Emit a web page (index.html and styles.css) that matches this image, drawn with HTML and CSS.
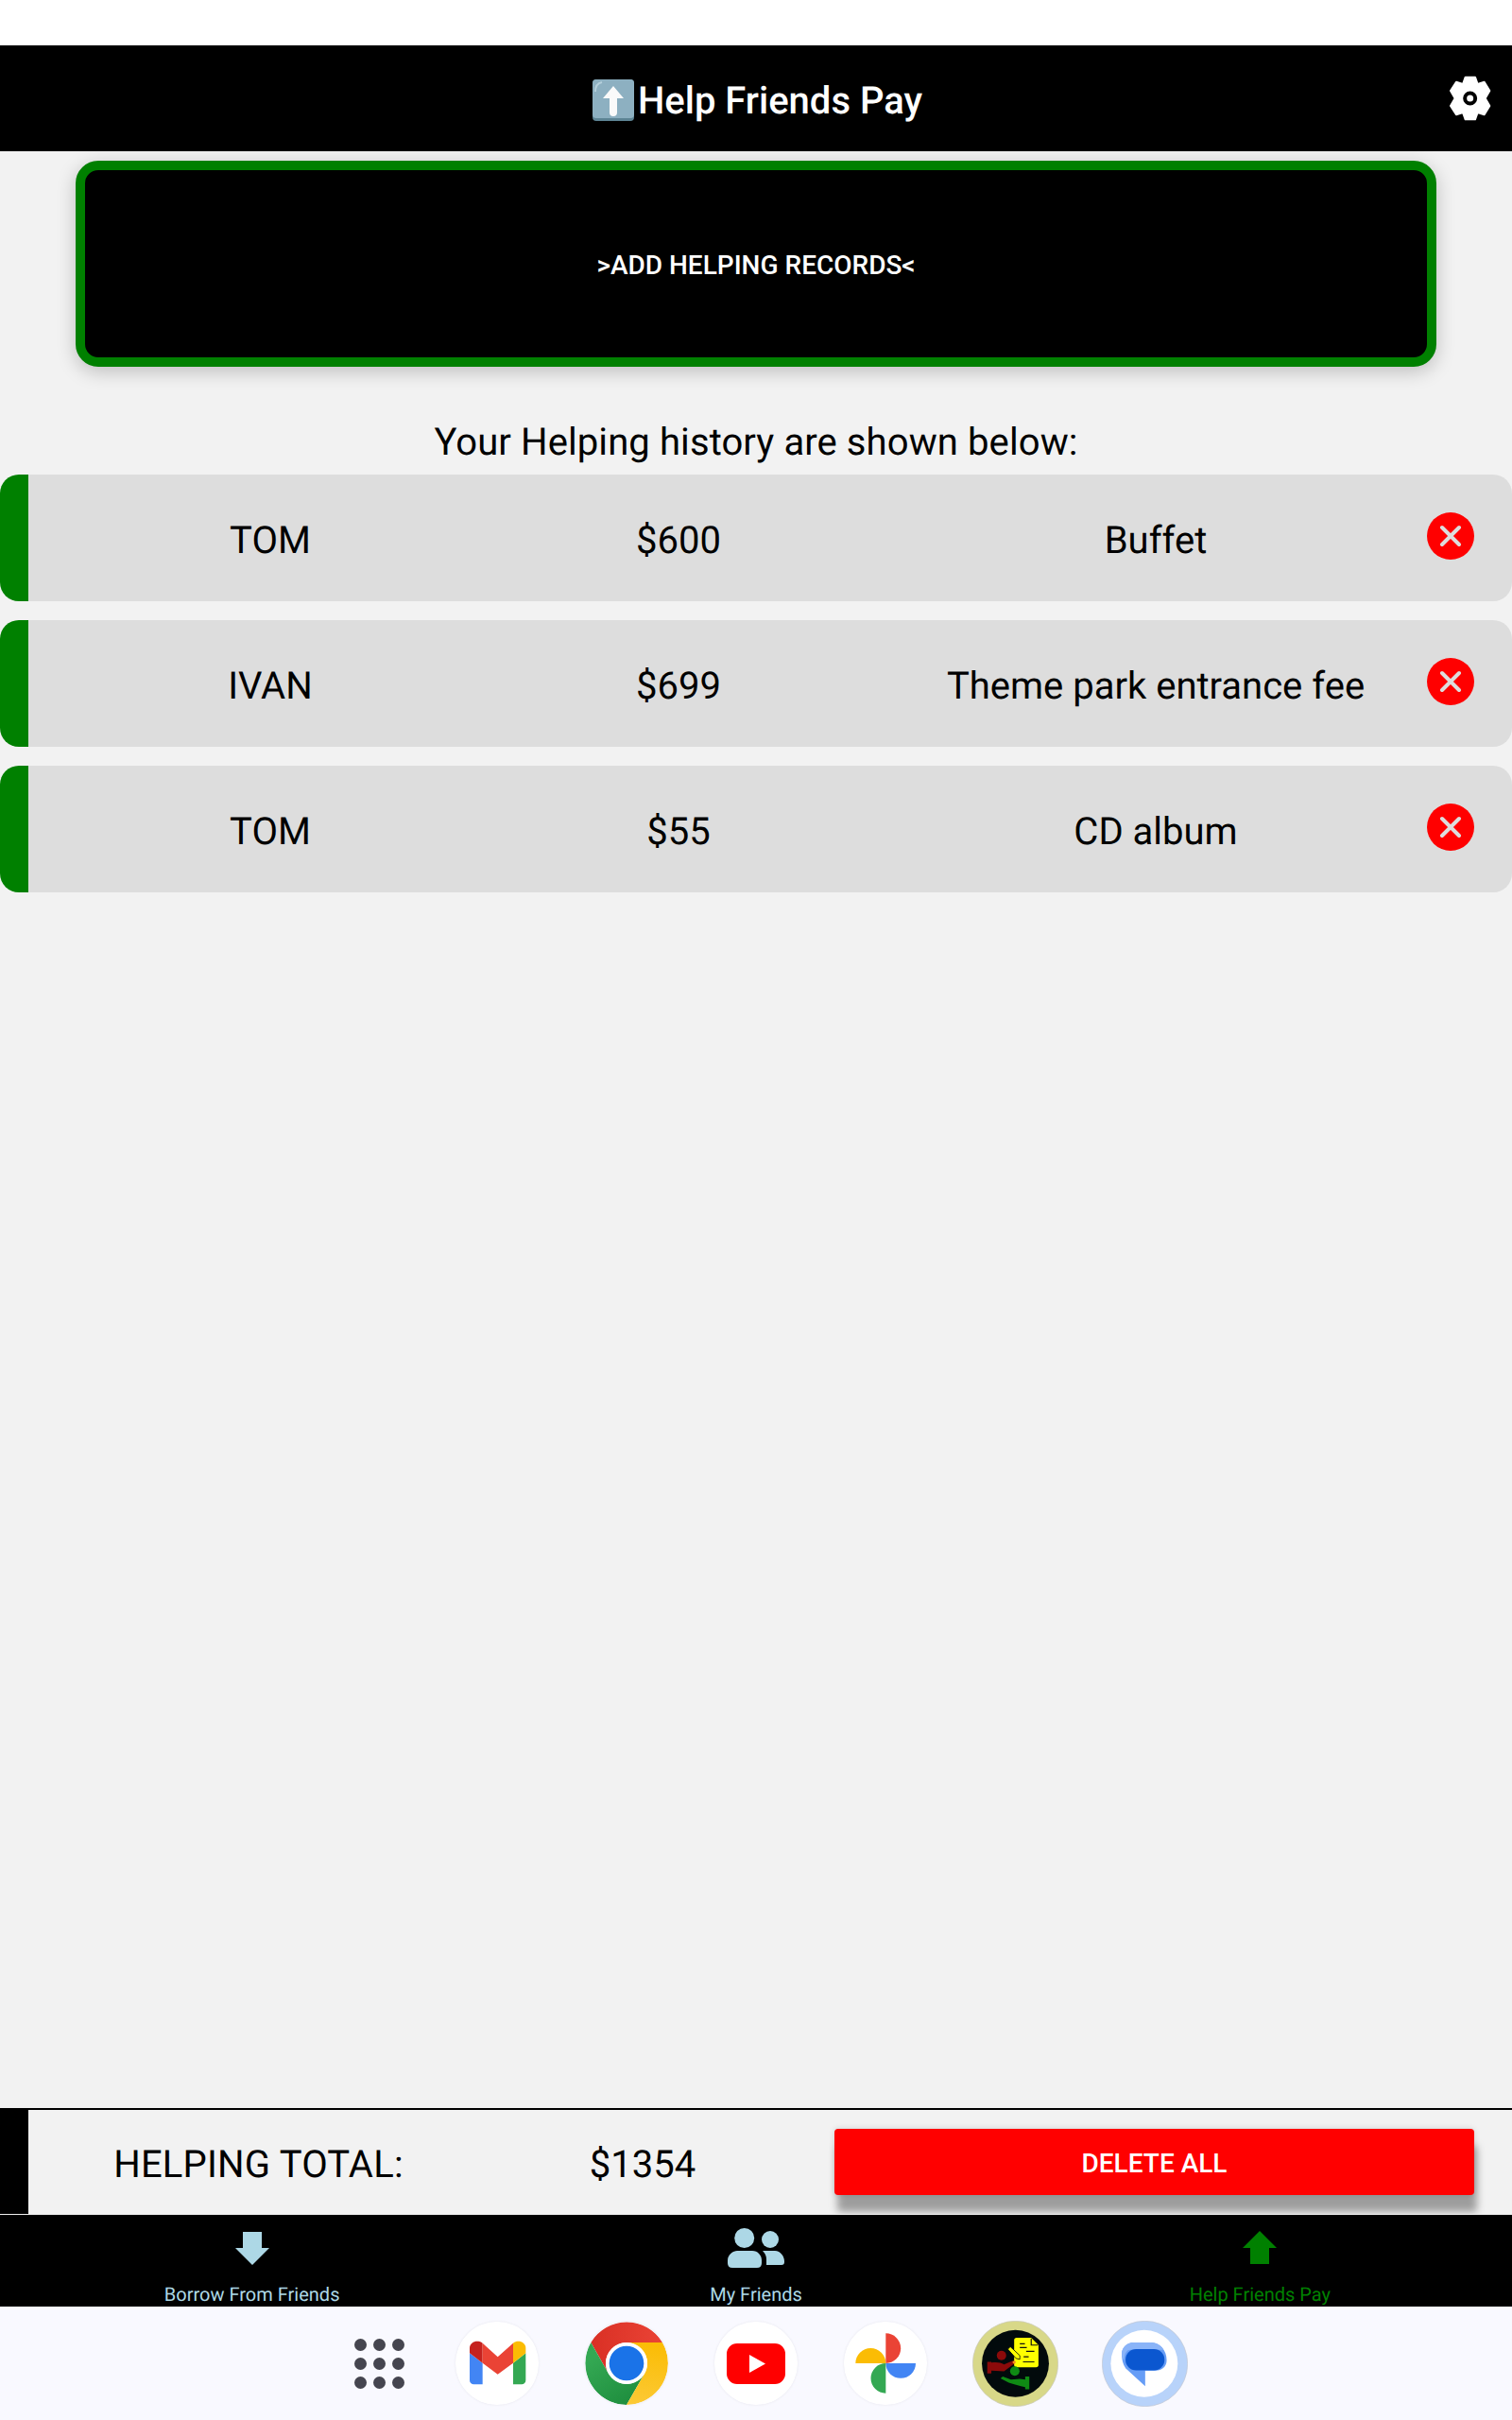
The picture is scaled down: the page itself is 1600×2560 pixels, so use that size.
FILE: index.html
```html
<!DOCTYPE html>
<html lang="en">
<head>
    <meta charset="UTF-8">
    <meta name="viewport" content="width=device-width, initial-scale=1.0">
    <title>Help Friends Pay</title>
    <link rel="stylesheet" href="styles.css">
</head>
<body>
    <div class="status-bar"></div>

    <header class="header">
        <h1 class="title">
            <svg class="title-emoji" viewBox="0 0 44 44">
                <rect width="44" height="44" rx="4" fill="#5d8494"/>
                <rect width="44" height="41" rx="4" fill="#8db0c1"/>
                <path d="M3 13 C3 7 5 4 10 3" fill="none" stroke="#b5d0dc" stroke-width="2"/>
                <path d="M22 7 L33 20 H26 V35 A2.5 2.5 0 0 1 18 35 V20 H11 Z" fill="#fafafa"/>
            </svg>
            <span>Help Friends Pay</span>
        </h1>
        <svg class="settings" viewBox="0 0 216 204">
            <path fill="#fff" stroke="#fff" stroke-width="6" stroke-linejoin="round" d="M92 35 H123 L131 57 L152 50 L169 78 L155 102 L169 126 L152 154 L131 147 L123 169 H92 L84 147 L63 154 L45 126 L59 102 L45 78 L63 50 L84 57 Z"/>
            <circle cx="107" cy="102" r="16.5" fill="#fff" stroke="#000" stroke-width="12"/>
        </svg>
    </header>

    <main class="content">
        <button class="add-btn">&gt;Add Helping Records&lt;</button>
        <p class="history-title">Your Helping history are shown below:</p>

        <div class="records">
            <div class="record">
                <span class="record-name">TOM</span>
                <span class="record-amount">$600</span>
                <span class="record-note">Buffet</span>
                <svg class="record-delete" viewBox="0 0 50 50">
                    <circle cx="25" cy="25" r="25" fill="#f00"/>
                    <path d="M16 16 L34 34 M34 16 L16 34" stroke="#ddd" stroke-width="4" stroke-linecap="round"/>
                </svg>
            </div>
            <div class="record">
                <span class="record-name">IVAN</span>
                <span class="record-amount">$699</span>
                <span class="record-note">Theme park entrance fee</span>
                <svg class="record-delete" viewBox="0 0 50 50">
                    <circle cx="25" cy="25" r="25" fill="#f00"/>
                    <path d="M16 16 L34 34 M34 16 L16 34" stroke="#ddd" stroke-width="4" stroke-linecap="round"/>
                </svg>
            </div>
            <div class="record">
                <span class="record-name">TOM</span>
                <span class="record-amount">$55</span>
                <span class="record-note">CD album</span>
                <svg class="record-delete" viewBox="0 0 50 50">
                    <circle cx="25" cy="25" r="25" fill="#f00"/>
                    <path d="M16 16 L34 34 M34 16 L16 34" stroke="#ddd" stroke-width="4" stroke-linecap="round"/>
                </svg>
            </div>
        </div>
    </main>

    <section class="total">
        <span class="total-side"></span>
        <span class="total-label">HELPING TOTAL:</span>
        <span class="total-amount">$1354</span>
        <button class="delete-all">Delete All</button>
    </section>

    <nav class="tabs">
        <div class="tab">
            <svg class="tab-icon" width="36" height="42" viewBox="0 0 36 42">
                <path d="M8 4 H28 V21 H36 L18 39 L0 21 H8 Z" fill="#add8e6"/>
            </svg>
            <span class="tab-label">Borrow From Friends</span>
        </div>
        <div class="tab">
            <svg class="tab-icon" width="62" height="42" viewBox="0 0 62 42">
                <circle cx="18.7" cy="10.5" r="10.5" fill="#add8e6"/>
                <path d="M1 37 V34 C1 28 7 24 11 24 H27 C33 24 37 29 37 34 V37 Q37 42 32 42 H6 Q1 42 1 37 Z" fill="#add8e6"/>
                <circle cx="46" cy="12" r="9" fill="#add8e6"/>
                <path d="M38 24 H51 C57 24 61 30 61 35 V36 Q61 39 58 39 H42 V33 C42 30 41 27 38 24 Z" fill="#add8e6"/>
            </svg>
            <span class="tab-label">My Friends</span>
        </div>
        <div class="tab tab-active">
            <svg class="tab-icon" width="36" height="42" viewBox="0 0 36 42">
                <path d="M18 3 L36 21 H28 V38 H8 V21 H0 Z" fill="#008000"/>
            </svg>
            <span class="tab-label">Help Friends Pay</span>
        </div>
    </nav>

    <footer class="dock">
        <div class="dock-grid">
            <i></i><i></i><i></i><i></i><i></i><i></i><i></i><i></i><i></i>
        </div>
        <div class="dock-slot">
            <svg class="dock-app" viewBox="0 0 264 264">
                <circle cx="132" cy="132" r="132" fill="#fff"/>
                <path d="M45 100 L86 131 V199 H58 A13 13 0 0 1 45 186 Z" fill="#4285f4"/>
                <path d="M223 100 L183 131 V199 H210 A13 13 0 0 0 223 186 Z" fill="#34a853"/>
                <path d="M45 100 V84 C45 64 70 56 86 68 V131 Z" fill="#c5221f"/>
                <path d="M223 100 V84 C223 64 198 56 183 68 V131 Z" fill="#fbbc04"/>
                <path d="M86 68 L134 112 L183 68 V131 L134 167 L86 131 Z" fill="#ea4335"/>
            </svg>
        </div>
        <div class="dock-slot">
            <svg class="dock-app" viewBox="0 0 264 264">
                <defs>
                    <linearGradient id="chromeGreen" x1="0.7" y1="1" x2="0.2" y2="0.2">
                        <stop offset="0" stop-color="#1e8e3e"/>
                        <stop offset="1" stop-color="#34a853"/>
                    </linearGradient>
                    <linearGradient id="chromeRed" x1="0" y1="0.6" x2="1" y2="0.6">
                        <stop offset="0" stop-color="#d93025"/>
                        <stop offset="1" stop-color="#ea4335"/>
                    </linearGradient>
                    <linearGradient id="chromeYellow" x1="0.5" y1="1" x2="0.6" y2="0">
                        <stop offset="0" stop-color="#fcc934"/>
                        <stop offset="1" stop-color="#fbbc04"/>
                    </linearGradient>
                </defs>
                <path d="M19 66 L75 165 A66 66 0 0 1 132 66 H246 A132 132 0 0 0 19 66 Z" fill="url(#chromeRed)"/>
                <path d="M19 66 A132 132 0 0 0 132 264 L189 165 A66 66 0 0 1 75 165 Z" fill="url(#chromeGreen)"/>
                <path d="M132 66 H246 A132 132 0 0 1 132 264 L189 165 A66 66 0 0 0 132 66 Z" fill="url(#chromeYellow)"/>
                <circle cx="132" cy="132" r="66" fill="#fff"/>
                <circle cx="132" cy="132" r="55" fill="#1a73e8"/>
            </svg>
        </div>
        <div class="dock-slot">
            <svg class="dock-app" viewBox="0 0 88 88">
                <circle cx="44" cy="44" r="44" fill="#fff"/>
                <rect x="13" y="23" width="62" height="43" rx="11" fill="#f00"/>
                <path d="M37 35 L54 44.5 L37 54 Z" fill="#fff"/>
            </svg>
        </div>
        <div class="dock-slot">
            <svg class="dock-app" viewBox="0 0 264 264">
                <circle cx="132" cy="132" r="132" fill="#fff"/>
                <path d="M133 37 A47.5 47.5 0 0 1 133 132 Z" fill="#ea4335"/>
                <path d="M37 132 A48 48 0 0 1 133 132 Z" fill="#fbbc04"/>
                <path d="M133 132 H228 A47.5 47.5 0 0 1 133 132 Z" fill="#4285f4"/>
                <path d="M133 132 V227 A47.5 47.5 0 0 1 133 132 Z" fill="#34a853"/>
            </svg>
        </div>
        <div class="dock-slot">
            <svg class="dock-app-lg" viewBox="0 0 272 272">
                <circle cx="136" cy="136" r="135" fill="#d8d888" stroke="#c9c9c0" stroke-width="2"/>
                <circle cx="136" cy="135" r="106" fill="#020a0c"/>
                <path d="M140 54 H186 L209 77 V139 A8 8 0 0 1 201 147 H140 A8 8 0 0 1 132 139 V62 A8 8 0 0 1 140 54 Z" fill="#ff0"/>
                <path d="M150 73 H166 M150 85 H172 M170 97 H196 M162 114 H178 M160 130 H196 M186 56 V77 H207" fill="none" stroke="#111" stroke-width="3.5"/>
                <path d="M112 90 L120 82 L150 110 L150 122 L138 119 Z" fill="#ff0" stroke="#020a0c" stroke-width="2.5"/>
                <circle cx="92" cy="110" r="15" fill="#8b0a0a"/>
                <path d="M47 130 H60 V132 C80 130 90 132 100 138 L128 126 L132 136 L100 160 L60 158 V167 H47 Z" fill="#8b0a0a"/>
                <circle cx="134" cy="159" r="15" fill="#0f8a14"/>
                <path d="M180 176 V217 H167 V210 C150 208 130 200 115 196 L89 182 L96 176 L122 186 L150 184 L167 186 V176 Z" fill="#0f8a14"/>
                <circle cx="132" cy="131" r="5" fill="#f58a1e"/>
            </svg>
        </div>
        <div class="dock-slot">
            <svg class="dock-app-lg" viewBox="0 0 272 272">
                <circle cx="136" cy="136" r="135" fill="#b8d3fa" stroke="#c4c8d0" stroke-width="2"/>
                <circle cx="134" cy="135" r="106" fill="#fff"/>
                <path d="M100 69 H155 C185 69 205 95 205 125 C205 145 190 158 170 158 H137 V207 L80 155 C68 143 63 125 63 105 C63 85 80 69 100 69 Z" fill="#669df6"/>
                <path d="M100 69 H155 C172 69 186 78 195 92 H90 C80 92 72 100 70 125 C65 118 63 112 63 105 C63 85 80 69 100 69 Z" fill="#8ab4f8"/>
                <rect x="75" y="90" width="123" height="67" rx="33" fill="#0b57d0"/>
            </svg>
        </div>
    </footer>
</body>
</html>
```

FILE: styles.css
```css
* {
    box-sizing: border-box;
}

body {
    margin: 0;
    height: 2560px;
    display: flex;
    flex-direction: column;
    font-family: Roboto, "Liberation Sans", sans-serif;
    text-rendering: geometricPrecision;
    background: #f2f2f2;
    color: #000;
}

.status-bar {
    height: 48px;
    background: #fff;
}

.header {
    height: 112px;
    background: #000;
    display: grid;
    grid-template-columns: 1fr auto 1fr;
    align-items: center;
    padding: 0 8px;
}
.title {
    grid-column: 2;
    margin: 4px 0 0 3px;
    display: flex;
    align-items: center;
    gap: 4px;
    color: #fff;
    font-size: 40px;
    font-weight: 500;
}
.title-emoji {
    width: 44px;
    height: 44px;
}
.settings {
    width: 72px;
    height: 68px;
    justify-self: end;
}

.content {
    flex: 1;
    display: flex;
    flex-direction: column;
}
.add-btn {
    height: 218px;
    margin: 10px 80px 0;
    padding-top: 4px;
    background: #000;
    border: 10px solid #008000;
    border-radius: 24px;
    box-shadow: 0 5px 20px rgba(0, 0, 0, 0.22);
    color: #fff;
    font-family: inherit;
    font-size: 28px;
    font-weight: 500;
    text-transform: uppercase;
}
.history-title {
    margin: 56px 0 11px;
    text-align: center;
    font-size: 40px;
    line-height: 47px;
    letter-spacing: 0.1px;
}

.records {
    display: flex;
    flex-direction: column;
    gap: 20px;
}
.record {
    position: relative;
    height: 134px;
    display: grid;
    grid-template-columns: 512px 352px 658px;
    align-items: center;
    padding-top: 4px;
    background: #ddd;
    border-left: 30px solid #008000;
    border-radius: 20px;
    font-size: 40px;
    text-align: center;
}
.record-delete {
    position: absolute;
    top: 40px;
    right: 40px;
    width: 50px;
    height: 50px;
}

.total {
    height: 112px;
    display: grid;
    grid-template-columns: 30px 487px 326px 1fr;
    align-items: center;
    border-top: 2px solid #000;
    font-size: 40px;
    text-align: center;
}
.total-side {
    height: 100%;
    background: #000;
}
.total-label,
.total-amount {
    margin-top: 4px;
}
.total-label {
    letter-spacing: 0.2px;
}
.delete-all {
    height: 70px;
    margin: 0 40px;
    padding-top: 3px;
    background: #f00;
    border: none;
    border-radius: 4px;
    box-shadow: 3px 18px 8px rgba(0, 0, 0, 0.35), 0 0 6px rgba(0, 0, 0, 0.15);
    color: #fff;
    font-family: inherit;
    font-size: 28px;
    font-weight: 500;
    text-transform: uppercase;
}

.tabs {
    height: 98px;
    display: flex;
    position: relative;
    background: #000;
    border-top: 1px solid #eee;
}
.tab {
    flex: 1;
    display: flex;
    flex-direction: column;
    align-items: center;
    padding-top: 14px;
    color: #add8e6;
}
.tab-icon {
    display: block;
}
.tab-label {
    margin-top: 16px;
    font-size: 20px;
    line-height: 24px;
}
.tab-active {
    color: #008000;
}

.dock {
    height: 120px;
    display: flex;
    align-items: center;
    padding-left: 375px;
    background: #f9f9ff;
}
.dock-grid {
    width: 53px;
    margin-right: 29.5px;
    display: grid;
    grid-template-columns: repeat(3, 13px);
    justify-content: space-between;
    row-gap: 7px;
}
.dock-grid i {
    height: 13px;
    border-radius: 50%;
    background: #45454f;
}
.dock-slot {
    width: 137px;
    display: flex;
    justify-content: center;
}
.dock-app {
    width: 88px;
    height: 88px;
    border-radius: 50%;
    box-shadow: 0 0 3px rgba(0, 0, 0, 0.08);
}
.dock-app-lg {
    width: 91px;
    height: 91px;
}
```
